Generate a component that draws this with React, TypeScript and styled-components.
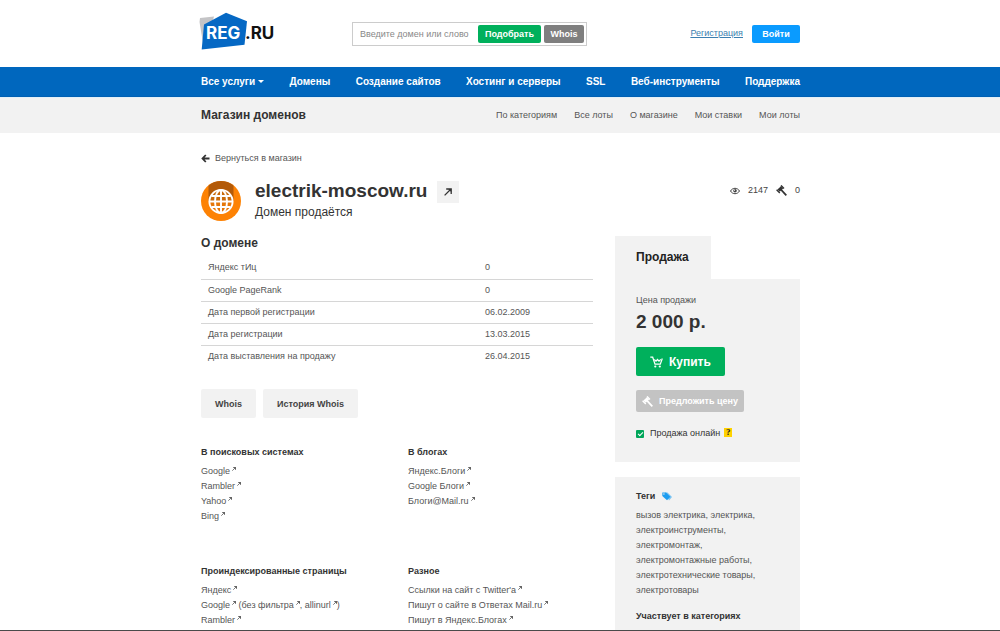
import React from 'react';
import styled, { createGlobalStyle } from 'styled-components';

const GlobalStyle = createGlobalStyle`
  *, *::before, *::after { box-sizing: border-box; }
  body {
    margin: 0;
    background: #fff;
    color: #555;
    font: 9px/15px "Liberation Sans", Arial, sans-serif;
  }
  h1, h2, h3, p, ul { margin: 0; padding: 0; }
  ul { list-style: none; }
  a { color: inherit; text-decoration: none; }
  button, input { font-family: inherit; margin: 0; }
  button { cursor: pointer; }
  svg { display: block; flex: none; }
`;

const Page = styled.div`
  border-bottom: 1px solid #4a4a4a;
`;

const Container = styled.div`
  max-width: 600px;
  margin: 0 auto;
  padding-left: 1px;
`;

const HeaderRow = styled(Container)`
  display: flex;
  align-items: center;
  height: 67px;
`;

const LogoLink = styled.a`
  flex: none;
  width: 151px;
  margin-left: -2px;
  margin-right: 2px;
  padding-bottom: 5px;
`;

const SearchForm = styled.form`
  display: flex;
  align-items: center;
  gap: 3px;
  width: 235px;
  height: 24px;
  padding: 0 2px 0 7px;
  border: 1px solid #ccc;
`;

const SearchInput = styled.input`
  flex: 1;
  min-width: 0;
  padding: 0;
  border: 0;
  outline: 0;
  background: none;
  font-size: 9px;
  line-height: 18px;
  color: #333;
  &::placeholder { color: #888; opacity: 1; }
`;

const SmallButton = styled.button<{ $bg: string; $width: number }>`
  flex: none;
  width: ${p => p.$width}px;
  height: 18px;
  padding: 0;
  border: 0;
  border-radius: 2px;
  background: ${p => p.$bg};
  color: #fff;
  font-size: 9px;
  font-weight: bold;
`;

const Account = styled.div`
  display: flex;
  align-items: center;
  gap: 9px;
  margin-left: auto;
`;

const RegisterLink = styled.a`
  color: #3d7fb0;
  text-decoration: underline;
`;

const NavBar = styled.nav`
  background: #0067be;
  border-bottom: 1px solid #0060b4;
`;

const NavList = styled(Container).attrs({ as: 'ul' })`
  display: flex;
  justify-content: space-between;
  align-items: center;
  height: 29px;
  color: #fff;
  font-size: 10px;
  font-weight: bold;
`;

const NavLink = styled.a`
  display: flex;
  align-items: center;
  gap: 3px;
`;

const SubBar = styled.div`
  background: #f2f2f2;
  border-top: 1px solid #e3f0f8;
  padding-bottom: 1px;
`;

const SubRow = styled(Container)`
  display: flex;
  justify-content: space-between;
  align-items: center;
  height: 34px;
`;

const SubNav = styled.nav`
  display: flex;
  gap: 17px;
`;

const SectionTitle = styled.h2`
  color: #333;
  font-size: 12px;
  line-height: 15px;
`;

const Content = styled(Container).attrs({ as: 'main' })`
  padding-top: 18px;
`;

const BackLink = styled.a`
  display: flex;
  align-items: center;
  gap: 5px;
`;

const DomainHead = styled.div`
  display: flex;
  align-items: flex-start;
  margin-top: 15px;
`;

const DomainText = styled.div`
  margin-left: 14px;
`;

const DomainName = styled.h1`
  color: #333;
  font-size: 19px;
  line-height: 20px;
`;

const DomainStatus = styled.p`
  margin-top: 4px;
  color: #333;
  font-size: 12px;
  line-height: 15px;
`;

const OpenLink = styled.a`
  display: grid;
  place-items: center;
  width: 22px;
  height: 22px;
  margin-left: 10px;
  background: #f2f2f2;
`;

const Stats = styled.div`
  display: flex;
  align-items: center;
  gap: 8px;
  height: 19px;
  margin-left: auto;
  color: #444;
`;

const Stat = styled.span`
  display: flex;
  align-items: center;
  gap: 8px;
`;

const Columns = styled.div`
  display: grid;
  grid-template-columns: minmax(0, 1fr) 185px;
  gap: 22px;
  margin-top: 15px;
`;

const FactsTable = styled.table`
  width: 100%;
  margin-top: 6px;
  border-collapse: collapse;
`;

const FactRow = styled.tr`
  height: 22px;
  & + & { border-top: 1px solid #d6d6d6; }
`;

const FactName = styled.th`
  width: 284px;
  padding: 0 0 0 7px;
  font-weight: normal;
  text-align: left;
`;

const FactValue = styled.td`
  padding: 0;
`;

const ButtonRow = styled.div`
  display: flex;
  gap: 7px;
  margin-top: 22px;
`;

const GreyButton = styled.button`
  height: 29px;
  padding: 0 14px;
  border: 0;
  border-radius: 2px;
  background: #f2f2f2;
  color: #444;
  font-size: 9px;
  font-weight: bold;
`;

const LinkGrid = styled.div`
  display: grid;
  grid-template-columns: 207px 1fr;
  row-gap: 40px;
  margin-top: 27px;
`;

const SmallTitle = styled.h3`
  display: flex;
  align-items: center;
  gap: 7px;
  color: #333;
  font-size: 9px;
  line-height: 15px;
`;

const LinkList = styled.ul`
  margin-top: 4px;
`;

const ArrowLink = styled.a`
  white-space: nowrap;
  & > svg { display: inline-block; margin-left: 2px; vertical-align: 3px; }
`;

const Sidebar = styled.aside`
  display: flex;
  flex-direction: column;
  gap: 15px;
`;

const SaleTab = styled.h2`
  width: 96px;
  padding: 14px 0 14px 21px;
  background: #f2f2f2;
  color: #222;
  font-size: 12px;
  line-height: 15px;
`;

const Panel = styled.div`
  padding: 14px 21px;
  background: #f2f2f2;
`;

const SaleBody = styled(Panel)`
  padding-bottom: 21px;
`;

const Price = styled.p`
  margin-top: 4px;
  color: #333;
  font-size: 19px;
  font-weight: bold;
  line-height: 20px;
`;

const BuyButton = styled.button`
  display: flex;
  align-items: center;
  gap: 6px;
  height: 29px;
  margin-top: 15px;
  padding: 0 14px;
  border: 0;
  border-radius: 2px;
  background: #00b05c;
  color: #fff;
  font-size: 12px;
  font-weight: bold;
`;

const OfferButton = styled(BuyButton)`
  height: 22px;
  margin-top: 14px;
  padding: 0 6px;
  background: #c3c3c3;
  font-size: 9px;
`;

const OnlineRow = styled.div`
  display: flex;
  align-items: center;
  margin-top: 14px;
  color: #333;
`;

const OnlineLabel = styled.label`
  display: flex;
  align-items: center;
  gap: 6px;
`;

const Tick = styled.input`
  appearance: none;
  display: grid;
  place-items: center;
  width: 8px;
  height: 8px;
  border-radius: 1px;
  background: #00a65a;
  &:checked::after {
    content: "";
    width: 5px;
    height: 3px;
    border: solid #fff;
    border-width: 0 0 1px 1px;
    transform: rotate(-45deg);
  }
`;

const Hint = styled.span`
  width: 8px;
  margin: -3px 0 0 4px;
  background: #ffd200;
  color: #222;
  font: bold 9px/9px "Liberation Serif", serif;
  text-align: center;
`;

const TagPanel = styled(Panel)`
  padding: 12px 21px 6px;
`;

const Tags = styled.p`
  margin: 4px 0 11px;
`;

const Logo = () => (
  <svg width="78" height="38" viewBox="0 0 78 38" role="img" aria-label="REG.RU">
    <path d="M1 6 15 4.500 12 15 4 31 .5 10z" fill="#c4c4c6" />
    <path d="M27 .8 48 9.300 45.500 32.700 2.700 37.500 5 12.500z" fill="#0568c4" />
    <text x="7" y="27" fill="#fff" fontFamily="Inter, sans-serif" fontSize="17" fontWeight="700">REG</text>
    <text x="46" y="27" fill="#111" fontFamily="Inter, sans-serif" fontSize="17" fontWeight="700">.RU</text>
  </svg>
);

const Globe = () => (
  <svg width="40" height="40" viewBox="0 0 40 40" aria-hidden="true">
    <circle cx="20" cy="20" r="20" fill="#fd8204" />
    <path d="M7.500 4.400a20 20 0 0 1 25 0V20h-25z" fill="#b35a08" />
    <circle cx="20" cy="20.500" r="12" fill="#c9690a" />
    <path d="M8 20.500a12 12 0 0 0 24 0z" fill="#e57608" />
    <g fill="none" stroke="#fff" strokeWidth="1.900">
      <circle cx="20" cy="20.500" r="11.600" />
      <ellipse cx="20" cy="20.500" rx="6" ry="11.500" />
      <path d="M20 9v23M8.500 20.500h23M10.500 15h19M10.500 26h19" />
    </g>
  </svg>
);

const BackArrow = () => (
  <svg width="9" height="9" viewBox="0 0 9 9" fill="none" stroke="#333" strokeWidth="1.800" aria-hidden="true">
    <path d="M4.800 1 1.500 4.500 4.800 8M1.500 4.500H8.500" />
  </svg>
);

const OutArrow = ({ size = 4 }: { size?: number }) => (
  <svg width={size} height={size} viewBox="0 0 8 8" fill="none" stroke="#333" strokeWidth="1.300" aria-hidden="true">
    <path d="M.6 7.400 6.500 1.500M2.200 1H7.200V6" />
    <path d="M4.200 1H7.200V4z" fill="#333" stroke="none" />
  </svg>
);

const Eye = () => (
  <svg width="10" height="8" viewBox="0 0 10 8" fill="none" stroke="#444" aria-hidden="true">
    <path d="M.5 4C2.500.4 7.500.4 9.500 4 7.500 7.600 2.500 7.600.5 4z" />
    <circle cx="5" cy="3.800" r="1.800" fill="#444" stroke="none" />
    <circle cx="4.500" cy="3.200" r=".6" fill="#fff" stroke="none" />
  </svg>
);

const Gavel = ({ color, size = 11 }: { color: string; size?: number }) => (
  <svg width={size} height={size} viewBox="0 0 11 11" fill="none" stroke={color} aria-hidden="true">
    <path d="M6 2.300 2.600 5.700" strokeWidth="3.200" />
    <path d="M5 .4 8 3.400M.6 4.800 3.800 8" strokeWidth="1.400" />
    <path d="M5 4.700 10.300 10.300" strokeWidth="1.700" />
  </svg>
);

const Cart = () => (
  <svg width="13" height="12" viewBox="0 0 13 12" fill="none" stroke="#fff" strokeWidth="1.200" aria-hidden="true">
    <path d="M.3 1.200H2.700L5 8.200H10.300L12.300 2.500" />
    <path d="M4.300 3.500 6 5.200 7.500 3.500 9 5.200 10.800 3.300" />
    <circle cx="5.300" cy="10.500" r="1.100" fill="#fff" stroke="none" />
    <circle cx="9.800" cy="10.500" r="1.100" fill="#fff" stroke="none" />
  </svg>
);

const TagIcon = () => (
  <svg width="10" height="9" viewBox="0 0 10 9" aria-hidden="true">
    <path d="M3 .5H5.500L10 5 7 8.500z" fill="#7cc4f2" />
    <path d="M.3.500H4L8.300 4.800 5 8.300.3 4z" fill="#1d9df0" />
    <circle cx="1.900" cy="2" r=".7" fill="#f2f2f2" />
  </svg>
);

const NAV = ['Все услуги', 'Домены', 'Создание сайтов', 'Хостинг и серверы', 'SSL', 'Веб-инструменты', 'Поддержка'];
const SUBNAV = ['По категориям', 'Все лоты', 'О магазине', 'Мои ставки', 'Мои лоты'];
const FACTS = [
  ['Яндекс тИц', '0'],
  ['Google PageRank', '0'],
  ['Дата первой регистрации', '06.02.2009'],
  ['Дата регистрации', '13.03.2015'],
  ['Дата выставления на продажу', '26.04.2015'],
];

const Out = ({ children }: { children: React.ReactNode }) => (
  <ArrowLink href="#">{children}<OutArrow /></ArrowLink>
);

const LinkGroup = ({ title, items }: { title: string; items: React.ReactNode[] }) => (
  <section>
    <SmallTitle>{title}</SmallTitle>
    <LinkList>{items.map((item, i) => <li key={i}>{item}</li>)}</LinkList>
  </section>
);

export default function App() {
  return (
    <Page>
      <GlobalStyle />
      <header>
        <HeaderRow>
          <LogoLink href="#"><Logo /></LogoLink>
          <SearchForm onSubmit={e => e.preventDefault()}>
            <SearchInput aria-label="Домен или слово" placeholder="Введите домен или слово" />
            <SmallButton $bg="#00b05c" $width={63}>Подобрать</SmallButton>
            <SmallButton $bg="#7f7f7f" $width={40} type="button">Whois</SmallButton>
          </SearchForm>
          <Account>
            <RegisterLink href="#">Регистрация</RegisterLink>
            <SmallButton $bg="#0a9bff" $width={48}>Войти</SmallButton>
          </Account>
        </HeaderRow>
        <NavBar>
          <NavList>
            {NAV.map((name, i) => (
              <li key={name}>
                <NavLink href="#">
                  {name}
                  {i === 0 && (
                    <svg width="6" height="3" viewBox="0 0 6 3" aria-hidden="true"><path d="M0 0h6L3 3z" fill="#fff" /></svg>
                  )}
                </NavLink>
              </li>
            ))}
          </NavList>
        </NavBar>
        <SubBar>
          <SubRow>
            <SectionTitle>Магазин доменов</SectionTitle>
            <SubNav>{SUBNAV.map(name => <a href="#" key={name}>{name}</a>)}</SubNav>
          </SubRow>
        </SubBar>
      </header>
      <Content>
        <BackLink href="#"><BackArrow />Вернуться в магазин</BackLink>
        <DomainHead>
          <Globe />
          <DomainText>
            <DomainName>electrik-moscow.ru</DomainName>
            <DomainStatus>Домен продаётся</DomainStatus>
          </DomainText>
          <OpenLink href="#" aria-label="Открыть сайт"><OutArrow size={8} /></OpenLink>
          <Stats>
            <Stat><Eye />2147</Stat>
            <Stat><Gavel color="#333" />0</Stat>
          </Stats>
        </DomainHead>
        <Columns>
          <div>
            <SectionTitle>О домене</SectionTitle>
            <FactsTable>
              <tbody>
                {FACTS.map(([name, value]) => (
                  <FactRow key={name}>
                    <FactName scope="row">{name}</FactName>
                    <FactValue>{value}</FactValue>
                  </FactRow>
                ))}
              </tbody>
            </FactsTable>
            <ButtonRow>
              <GreyButton>Whois</GreyButton>
              <GreyButton>История Whois</GreyButton>
            </ButtonRow>
            <LinkGrid>
              <LinkGroup
                title="В поисковых системах"
                items={['Google', 'Rambler', 'Yahoo', 'Bing'].map(n => <Out key={n}>{n}</Out>)}
              />
              <LinkGroup
                title="В блогах"
                items={['Яндекс.Блоги', 'Google Блоги', 'Блоги@Mail.ru'].map(n => <Out key={n}>{n}</Out>)}
              />
              <LinkGroup
                title="Проиндексированные страницы"
                items={[
                  <Out key="y">Яндекс</Out>,
                  <React.Fragment key="g">
                    <Out>Google</Out> (<Out>без фильтра</Out>, <Out>allinurl</Out>)
                  </React.Fragment>,
                  <Out key="r">Rambler</Out>,
                ]}
              />
              <LinkGroup
                title="Разное"
                items={["Ссылки на сайт с Twitter'a", 'Пишут о сайте в Ответах Mail.ru', 'Пишут в Яндекс.Блогах'].map(n => <Out key={n}>{n}</Out>)}
              />
            </LinkGrid>
          </div>
          <Sidebar>
            <section>
              <SaleTab>Продажа</SaleTab>
              <SaleBody>
                <p>Цена продажи</p>
                <Price>2 000 р.</Price>
                <BuyButton><Cart />Купить</BuyButton>
                <OfferButton><Gavel color="#fff" />Предложить цену</OfferButton>
                <OnlineRow>
                  <OnlineLabel><Tick type="checkbox" defaultChecked />Продажа онлайн</OnlineLabel>
                  <Hint>?</Hint>
                </OnlineRow>
              </SaleBody>
            </section>
            <TagPanel>
              <SmallTitle>Теги <TagIcon /></SmallTitle>
              <Tags>вызов электрика, электрика, электроинструменты, электромонтаж, электромонтажные работы, электротехнические товары, электротовары</Tags>
              <SmallTitle>Участвует в категориях</SmallTitle>
            </TagPanel>
          </Sidebar>
        </Columns>
      </Content>
    </Page>
  );
}
